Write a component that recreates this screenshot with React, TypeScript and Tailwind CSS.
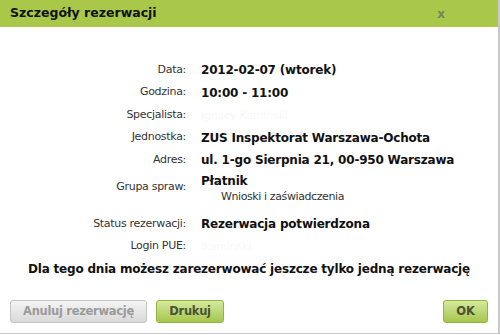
import React from "react";

const font = { fontFamily: "'DejaVu Sans', Verdana, sans-serif" };

function Row({ label, children }: { label: string; children?: React.ReactNode }) {
  return (
    <div className="flex items-center h-[22.5px]">
      <div className="w-[186px] shrink-0 text-right text-[11px] text-[#333] tracking-[-0.3px]">{label}:</div>
      <div className="pl-[15px] text-[12px] font-bold text-[#111] whitespace-nowrap tracking-[-0.2px]">{children}</div>
    </div>
  );
}

export default function App() {
  return (
    <div className="w-[500px] h-[335px] bg-white overflow-hidden" style={font}>
      <div className="w-[500px] h-[334px] border-r-2 border-b border-[#c8c8c8] flex flex-col">
        <div className="h-[27px] shrink-0 bg-[#a9c84a] flex items-center justify-between pl-[10px] pr-[53px]">
          <span className="text-[12.5px] font-bold text-[#111]">Szczegóły rezerwacji</span>
          <span className="text-[12px] font-bold text-[#6f8a5a] leading-none">x</span>
        </div>
        <div className="pt-[31.75px] flex flex-col">
          <Row label="Data">2012-02-07 (wtorek)</Row>
          <Row label="Godzina">10:00 - 11:00</Row>
          <Row label="Specjalista">
            <span className="font-normal text-[11px] text-[#f8f8f8]">Ignacy Kamiński</span>
          </Row>
          <Row label="Jednostka">ZUS Inspektorat Warszawa-Ochota</Row>
          <Row label="Adres">ul. 1-go Sierpnia 21, 00-950 Warszawa</Row>
          <div className="flex h-[41.5px]">
            <div className="w-[186px] shrink-0 text-right text-[11px] text-[#333] leading-[16px] pt-[8px] tracking-[-0.3px]">Grupa spraw:</div>
            <div className="pl-[15px] pt-[2px] leading-[16px]">
              <div className="text-[12px] font-bold text-[#111] tracking-[-0.2px]">Płatnik</div>
              <div className="pl-[20px] text-[11px] text-[#333] tracking-[-0.4px]">Wnioski i zaświadczenia</div>
            </div>
          </div>
          <Row label="Status rezerwacji">Rezerwacja potwierdzona</Row>
          <Row label="Login PUE">
            <span className="font-normal text-[11px] text-[#f8f8f8]">ikaminski</span>
          </Row>
          <div className="h-[22.5px] flex items-center justify-center text-[12px] font-bold text-[#111] tracking-[-0.2px]">
            Dla tego dnia możesz zarezerwować jeszcze tylko jedną rezerwację
          </div>
        </div>
        <div className="mt-[20px] flex items-center justify-between pl-[10px] pr-[10px]">
          <div className="flex gap-[9px]">
            <button className="w-[137px] h-[23px] rounded-[3px] border border-[#c4c4c4] bg-gradient-to-b from-[#f4f4f4] to-[#d9d9d9] text-[11.5px] font-bold text-[#9a9a9a] tracking-[-0.3px]">
              Anuluj rezerwację
            </button>
            <button className="w-[68px] h-[23px] rounded-[3px] border border-[#93b441] bg-gradient-to-b from-[#d6e99d] to-[#a5c64b] text-[11.5px] font-bold text-[#4a5238] tracking-[-0.3px]">
              Drukuj
            </button>
          </div>
          <button className="w-[45px] h-[23px] rounded-[3px] border border-[#93b441] bg-gradient-to-b from-[#d6e99d] to-[#a5c64b] text-[11.5px] font-bold text-[#4a5238]">
            OK
          </button>
        </div>
      </div>
    </div>
  );
}
